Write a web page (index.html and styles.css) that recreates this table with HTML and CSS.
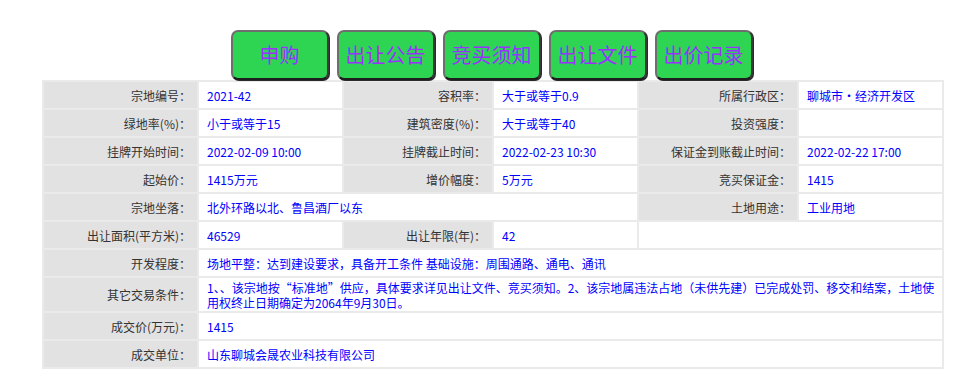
FILE: index.html
```html
<!DOCTYPE html>
<html lang="zh-CN">
<head>
<meta charset="utf-8">
<title>宗地详情</title>
<link rel="stylesheet" href="styles.css">
</head>
<body>
<div class="page">
  <div class="actions">
    <a class="btn">申购</a>
    <a class="btn">出让公告</a>
    <a class="btn">竞买须知</a>
    <a class="btn">出让文件</a>
    <a class="btn">出价记录</a>
  </div>
  <table class="info">
    <colgroup>
      <col class="c1"><col class="c2"><col class="c3"><col class="c4"><col class="c5"><col class="c6">
    </colgroup>
    <tr>
      <th>宗地编号：</th><td class="num">2021-42</td>
      <th>容积率：</th><td>大于或等于0.9</td>
      <th>所属行政区：</th><td>聊城市·经济开发区</td>
    </tr>
    <tr>
      <th>绿地率(%)：</th><td>小于或等于15</td>
      <th>建筑密度(%)：</th><td>大于或等于40</td>
      <th>投资强度：</th><td></td>
    </tr>
    <tr>
      <th>挂牌开始时间：</th><td class="num">2022-02-09 10:00</td>
      <th>挂牌截止时间：</th><td class="num">2022-02-23 10:30</td>
      <th>保证金到账截止时间：</th><td class="num">2022-02-22 17:00</td>
    </tr>
    <tr>
      <th>起始价：</th><td>1415万元</td>
      <th>增价幅度：</th><td>5万元</td>
      <th>竞买保证金：</th><td class="num">1415</td>
    </tr>
    <tr>
      <th>宗地坐落：</th><td colspan="3">北外环路以北、鲁昌酒厂以东</td>
      <th>土地用途：</th><td>工业用地</td>
    </tr>
    <tr>
      <th>出让面积(平方米)：</th><td class="num">46529</td>
      <th>出让年限(年)：</th><td class="num">42</td>
      <td colspan="2"></td>
    </tr>
    <tr>
      <th>开发程度：</th><td colspan="5">场地平整：达到建设要求，具备开工条件 基础设施：周围通路、通电、通讯</td>
    </tr>
    <tr class="tall">
      <th>其它交易条件：</th><td colspan="5" class="wrap">1、、该宗地按“标准地”供应，具体要求详见出让文件、竞买须知。2、该宗地属违法占地（未供先建）已完成处罚、移交和结案，土地使用权终止日期确定为2064年9月30日。</td>
    </tr>
    <tr>
      <th>成交价(万元)：</th><td colspan="5" class="num">1415</td>
    </tr>
    <tr>
      <th>成交单位：</th><td colspan="5">山东聊城会晟农业科技有限公司</td>
    </tr>
  </table>
</div>
</body>
</html>
```

FILE: styles.css
```css
html, body {
  margin: 0;
  padding: 0;
  background: #ffffff;
}

body {
  font-family: "Noto Sans CJK SC", "Noto Sans", sans-serif;
  font-size: 12px;
}

.page {
  width: 902px;
  margin-left: 42px;
  padding-top: 30px;
}

.actions {
  display: flex;
  justify-content: center;
  gap: 8px;
  padding-right: 3px;
  margin-bottom: 0;
}

.btn {
  box-sizing: border-box;
  width: 98px;
  height: 50px;
  display: flex;
  align-items: center;
  justify-content: center;
  background: #2dd552;
  border: 2px solid #6e6e6e;
  border-right-color: #3a3a3a;
  border-bottom-color: #1e1e1e;
  border-radius: 7px;
  box-shadow: 1px 1px 0 #2a2a2a;
  color: #9b30ff;
  font-size: 20px;
  line-height: 1;
  text-decoration: none;
  font-family: "Noto Sans CJK SC", sans-serif;
}

.info {
  width: 902px;
  table-layout: fixed;
  border-collapse: separate;
  border-spacing: 2px;
  background: #eaeaea;
}

.c1 { width: 153px; }
.c2 { width: 143px; }
.c3 { width: 148px; }
.c4 { width: 143px; }
.c5 { width: 158px; }
.c6 { width: 143px; }

.info th,
.info td {
  height: 26px;
  padding: 0;
  vertical-align: middle;
  line-height: 15px;
  font-size: 12px;
  font-weight: normal;
}

.info th {
  background: #e2e2e2;
  color: #333333;
  text-align: right;
  padding-right: 6px;
}

.info td {
  background: #ffffff;
  color: #0000ff;
  text-align: left;
  padding-left: 8px;
}

.info .num {
  font-size: 12px;
}

.info tr.tall th,
.info tr.tall td {
  height: 33px;
}

.info td.wrap {
  padding-right: 0;
}
```
